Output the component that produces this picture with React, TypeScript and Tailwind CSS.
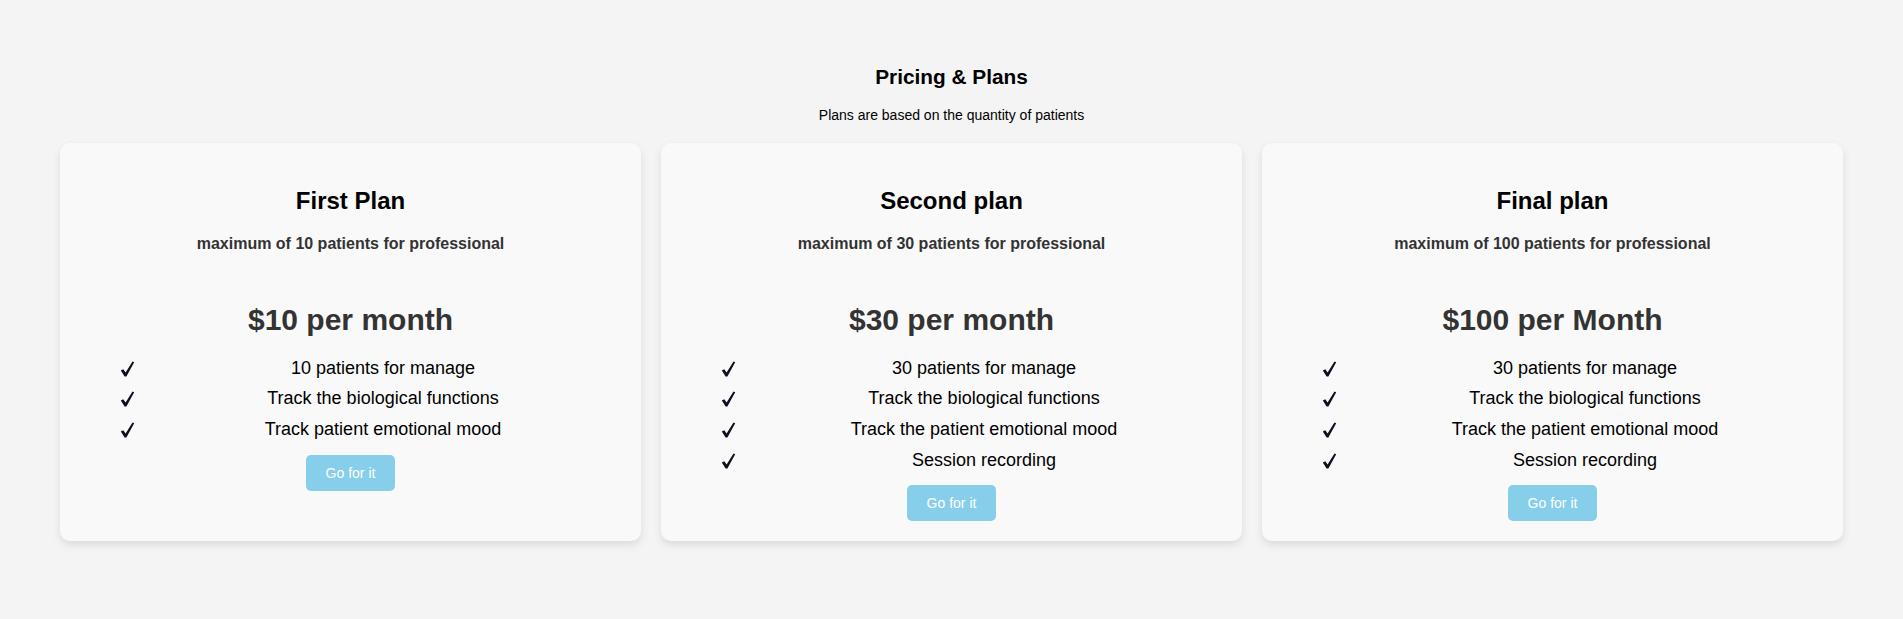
import React from 'react';

type Plan = {
  name: string;
  limit: string;
  price: string;
  features: string[];
};

const plans: Plan[] = [
  {
    name: 'First Plan',
    limit: 'maximum of 10 patients for professional',
    price: '$10 per month',
    features: ['10 patients for manage', 'Track the biological functions', 'Track patient emotional mood'],
  },
  {
    name: 'Second plan',
    limit: 'maximum of 30 patients for professional',
    price: '$30 per month',
    features: [
      '30 patients for manage',
      'Track the biological functions',
      'Track the patient emotional mood',
      'Session recording',
    ],
  },
  {
    name: 'Final plan',
    limit: 'maximum of 100 patients for professional',
    price: '$100 per Month',
    features: [
      '30 patients for manage',
      'Track the biological functions',
      'Track the patient emotional mood',
      'Session recording',
    ],
  },
];

// slanted check mark, short thick left stroke and long right stroke
const Check = () => (
  <svg width="15" height="16" viewBox="0 0 15 16" className="mt-[3px] mr-[10px] shrink-0" aria-hidden>
    <path d="M0.8 9.5 L3.3 8.2 L5.6 11.4 L12.5 0.6 L14.2 1.3 L6.4 15.4 L4.6 15.4 Z" fill="#0b0f1e" />
  </svg>
);

const PlanCard: React.FC<{ plan: Plan }> = ({ plan }) => (
  <div className="flex flex-col items-center rounded-[10px] bg-[#f9f9f9] p-[20px] text-center shadow-[0_4px_8px_rgba(0,0,0,0.1)]">
    <h3 className="mt-[24px] text-[24px] leading-[27.6px] font-bold text-black">{plan.name}</h3>
    <p className="mt-[21px] text-[16px] leading-[18.4px] font-bold text-[#333]">{plan.limit}</p>
    <p className="mt-[49.5px] text-[30px] leading-[34.5px] font-bold text-[#333]">{plan.price}</p>
    <ul className="mt-[15px] w-full pl-[40px]">
      {plan.features.map((f) => (
        <li key={f} className="flex items-start py-[5px] text-[18px] leading-[20.7px] text-black">
          <Check />
          <span className="flex-1 text-center">{f}</span>
        </li>
      ))}
    </ul>
    <button className="mt-[10px] rounded-[5px] bg-[#87ceeb] px-[20px] py-[10px] text-[14px] leading-[16px] text-white">
      Go for it
    </button>
  </div>
);

export default function App() {
  return (
    <div className="min-h-screen bg-[#f4f4f4] font-['Liberation_Sans',Arial,sans-serif]">
      <section className="px-[60px] pt-[65px]">
        <h2 className="text-center text-[20.8px] leading-[24px] font-bold text-black">Pricing &amp; Plans</h2>
        <p className="mt-[18px] text-center text-[14px] leading-[16px] text-black">
          Plans are based on the quantity of patients
        </p>
        <div className="mt-[19.5px] grid grid-cols-3 gap-[20px]">
          {plans.map((p) => (
            <PlanCard key={p.name} plan={p} />
          ))}
        </div>
      </section>
    </div>
  );
}
